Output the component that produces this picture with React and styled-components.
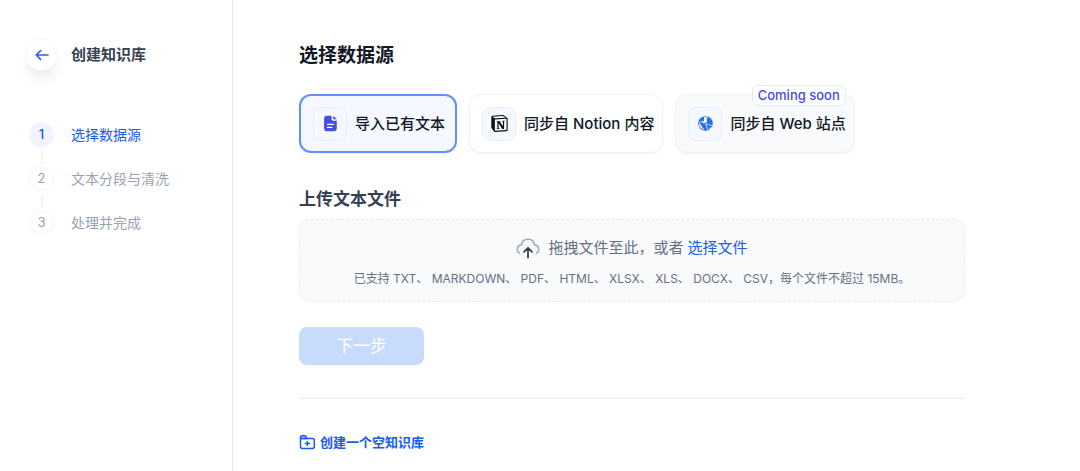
import React from "react";
import styled, { createGlobalStyle, css } from "styled-components";

const GlobalStyle = createGlobalStyle`
  *, *::before, *::after { box-sizing: border-box; }
  body {
    margin: 0;
    background: #fff;
    color: #111827;
    font-family: Inter, "Noto Sans CJK SC", sans-serif;
    -webkit-font-smoothing: antialiased;
  }
  h1, h2, p, ol { margin: 0; padding: 0; }
  button { font-family: inherit; }
  a { text-decoration: none; }
`;

const Page = styled.div`
  display: flex;
  min-height: 100vh;
`;

const Sidebar = styled.aside`
  flex: 0 0 233px;
  padding: 38px 24px 0 25px;
  border-right: 1px solid #e5e7eb;
`;

const SidebarHeader = styled.div`
  display: flex;
  align-items: center;
  gap: 13px;
`;

const BackButton = styled.button`
  display: flex;
  align-items: center;
  justify-content: center;
  width: 33px;
  height: 33px;
  padding: 0;
  border: 1px solid #f6f7f9;
  border-radius: 50%;
  background: #fff;
  color: #2563eb;
  box-shadow: 0 12px 16px -4px rgba(16, 24, 40, 0.08), 0 4px 6px -2px rgba(16, 24, 40, 0.03);
`;

const SidebarTitle = styled.h1`
  font-size: 15px;
  line-height: 24px;
  font-weight: 600;
  color: #374151;
`;

const StepList = styled.ol`
  list-style: none;
  margin-top: 51px;
  padding-left: 4px;
`;

const Step = styled.li`
  display: flex;
  align-items: center;
  gap: 17px;
  font-size: 14px;
  line-height: 25px;
  color: ${(p) => (p.$active ? "#155eef" : "#98a2b3")};

  & + & { margin-top: 19px; }
`;

const StepNumber = styled.span`
  position: relative;
  flex: none;
  width: 25px;
  height: 25px;
  border: 1px solid ${(p) => (p.$active ? "#eff4ff" : "#f2f4f7")};
  border-radius: 50%;
  background: ${(p) => (p.$active ? "#eff4ff" : "#fff")};
  font-size: 13px;
  line-height: 23px;
  font-weight: ${(p) => (p.$active ? 500 : 400)};
  text-align: center;

  ${Step}:not(:last-child) &::after {
    content: "";
    position: absolute;
    top: 27px;
    left: 11px;
    width: 2px;
    height: 14px;
    background: #f2f4f7;
  }
`;

const Main = styled.main`
  flex: 1;
  padding: 43px 66px 18px;
`;

const Content = styled.div`
  max-width: 666px;
`;

const PageTitle = styled.h2`
  font-size: 19px;
  line-height: 26px;
  font-weight: 600;
`;

const SourceList = styled.div`
  display: flex;
  gap: 12px;
  margin-top: 25px;
`;

const SourceCard = styled.button`
  position: relative;
  display: flex;
  align-items: center;
  gap: 8px;
  height: 59px;
  padding: 0 8px 0 12px;
  border: 1px solid #f2f4f7;
  border-radius: 12px;
  background: #fff;
  box-shadow: 0 1px 2px rgba(16, 24, 40, 0.05);
  color: #111827;
  font-size: 15px;
  line-height: 21px;
  font-weight: 500;
  white-space: nowrap;

  ${(p) => p.$selected && css`
    padding: 0 10px 0 12px;
    border: 2px solid #6090fa;
    background: #f5f8ff;
  `}
  ${(p) => p.disabled && css`
    background: #f9fafb;
  `}
`;

const IconTile = styled.span`
  display: flex;
  align-items: center;
  justify-content: center;
  width: 34px;
  height: 34px;
  border: 1px solid #e4efff;
  border-radius: 8px;
  background: #f5f9ff;
`;

const SoonBadge = styled.span`
  position: absolute;
  top: -10px;
  right: 8px;
  padding: 0 5px;
  border: 1px solid #e0eaff;
  border-radius: 6px;
  background: #fff;
  color: #444ce7;
  font-size: 13px;
  line-height: 19px;
  font-weight: 500;
`;

const SectionTitle = styled.h2`
  margin-top: 33px;
  font-size: 17px;
  line-height: 26px;
  font-weight: 600;
  color: #344054;
`;

const DropZone = styled.div`
  margin-top: 7px;
  padding: 15px 12px 13px;
  border: 1px dashed #eaecf0;
  border-radius: 12px;
  background: #f9fafb;
  color: #667085;
  text-align: center;
`;

const DropPrompt = styled.p`
  display: flex;
  align-items: center;
  justify-content: center;
  gap: 4px;
  font-size: 15px;
  line-height: 26px;

  svg { margin-right: 4px; }
`;

const BrowseLink = styled.a`
  color: #155eef;
`;

const DropHint = styled.p`
  margin-top: 8px;
  font-size: 12px;
  line-height: 19px;
`;

const NextButton = styled.button`
  display: block;
  width: 125px;
  margin-top: 25px;
  padding: 6px 0;
  border: 0;
  border-radius: 8px;
  background: #c7dcfa;
  color: #fff;
  font-size: 17px;
  line-height: 26px;
`;

const Divider = styled.hr`
  margin: 33px 0;
  border: 0;
  border-top: 1px solid #eaecf0;
`;

const CreateLink = styled.a`
  display: inline-flex;
  align-items: center;
  gap: 4px;
  color: #155eef;
  font-size: 13px;
  line-height: 20px;
  font-weight: 600;
`;

const ArrowIcon = () => (
  <svg width="14" height="12" viewBox="0 0 14 12" fill="none" stroke="currentColor" strokeWidth="1.6" strokeLinecap="round" strokeLinejoin="round">
    <path d="M13 6H1.2M5.600 1.600 1.200 6l4.400 4.400" />
  </svg>
);

const FileIcon = () => (
  <svg width="17" height="17" viewBox="0 0 16 16">
    <path fill="#444ce7" d="M4.600.700H9v3.100c0 .9.600 1.500 1.500 1.500h3.400v7.100c0 1.800-1 2.900-2.700 2.900H4.600c-1.700 0-2.600-1.100-2.600-2.900V3.600C2 1.800 2.900.700 4.600.700Z" />
    <path fill="#444ce7" d="M10.500.900c.3.100.4.200.6.400l2.100 2.100c.2.200.3.300.4.600h-2.700c-.2 0-.4-.2-.4-.4Z" />
    <path stroke="#fff" strokeWidth="1.200" strokeLinecap="round" d="M5.300 8.900h5.400M5.300 11.700h4" />
  </svg>
);

const NotionIcon = () => (
  <svg width="17" height="17" viewBox="0 0 24 24" fill="#111">
    <path d="M1.200 2.500 5 6.500V23l-3.800-4.500Z" />
    <path d="M4.459 4.208c.746.606 1.026.56 2.428.466l13.215-.793c.28 0 .047-.28-.046-.326L17.860 1.968c-.42-.326-.981-.7-2.055-.607L3.010 2.295c-.466.046-.56.280-.374.466zm.793 3.080v13.904c0 .747.373 1.027 1.214.98l14.523-.84c.841-.046.935-.56.935-1.167V6.354c0-.606-.233-.933-.748-.887l-15.177.887c-.56.047-.747.327-.747.933zm14.337.745c.093.42 0 .840-.420.888l-.7.140v10.264c-.608.327-1.168.514-1.635.514-.748 0-.935-.234-1.495-.933l-4.577-7.186v6.952L12.210 19s0 .840-1.168.840l-3.222.186c-.093-.186 0-.653.327-.746l.840-.233V9.854L7.822 9.760c-.094-.420.140-1.026.793-1.073l3.456-.233 4.764 7.279v-6.440l-1.215-.139c-.093-.514.280-.887.747-.933zM1.936 1.035l13.310-.98c1.634-.140 2.055-.047 3.082.7l4.249 2.986c.7.513.934.653.934 1.213v16.378c0 1.026-.373 1.634-1.680 1.726l-15.458.934c-.98.047-1.448-.093-1.962-.747l-3.129-4.060c-.56-.747-.793-1.306-.793-1.960V2.667c0-.839.374-1.540 1.447-1.632z" />
  </svg>
);

const WebIcon = () => (
  <svg width="17" height="17" viewBox="0 0 17 17">
    <circle cx="8.500" cy="8.500" r="7.300" fill="#2970e8" />
    <path fill="#f5f9ff" d="M6.800 2.300c1.200-.4 2.500-.4 3.700 0l-.8 1.500.3 3.200-2 1.100-1.500.100-1.800-1-1.700.100-.5 1.400 1.600.900.400 1.800 2 2 .500 1.400-.9-.2-3.300-2.700-.9-3.400L2.800 6.800 5.300 6.300 6.900 6.200 7.300 4Z" />
    <path fill="#f5f9ff" d="M7.900 8.300 17 10.800v2.800l-2 .700-1.400 2.900h-1.900Z" />
    <path fill="#2970e8" d="m9.200 9.300 6.800 2-2.900 1.600-1.400 2.900Z" />
  </svg>
);

const CloudIcon = () => (
  <svg width="24" height="24" viewBox="0 0 24 24" fill="none" strokeWidth="1.600" strokeLinecap="round" strokeLinejoin="round">
    <path stroke="#a3a9b5" d="M3.600 17.300C2.200 16.500 1.300 15.100 1.300 13.400c0-2.400 1.800-4.300 4.200-4.500C6 5.500 8.600 3.200 12 3.200s6 2.300 6.500 5.700c2.400.2 4.200 2.100 4.200 4.500 0 1.700-.9 3.100-2.300 3.900" />
    <path stroke="#344054" strokeWidth="1.800" d="M12 21.500V12M8 15.800l4-4 4 4" />
  </svg>
);

const FolderPlusIcon = () => (
  <svg width="17" height="17" viewBox="0 0 17 17" fill="none" stroke="currentColor" strokeWidth="1.500" strokeLinecap="round" strokeLinejoin="round">
    <path fill="#c7d7fe" d="M1.500 4.500V3.400c0-1 .6-1.600 1.600-1.600h2.500c.8 0 1.200.4 1.500 1l.9 1.700Z" />
    <path d="M1.500 4.500h11.800c1.300 0 2 .8 2 2v6c0 1.300-.7 2-2 2H3.500c-1.300 0-2-.7-2-2ZM8.400 7.400v4.200M6.300 9.500h4.200" />
  </svg>
);

const steps = ["选择数据源", "文本分段与清洗", "处理并完成"];

export default function App() {
  return (
    <>
      <GlobalStyle />
      <Page>
        <Sidebar>
          <SidebarHeader>
            <BackButton type="button" aria-label="返回"><ArrowIcon /></BackButton>
            <SidebarTitle>创建知识库</SidebarTitle>
          </SidebarHeader>
          <StepList>
            {steps.map((label, i) => (
              <Step key={label} $active={i === 0}>
                <StepNumber $active={i === 0}>{i + 1}</StepNumber>
                {label}
              </Step>
            ))}
          </StepList>
        </Sidebar>
        <Main>
          <Content>
            <PageTitle>选择数据源</PageTitle>
            <SourceList>
              <SourceCard type="button" $selected>
                <IconTile><FileIcon /></IconTile>
                导入已有文本
              </SourceCard>
              <SourceCard type="button">
                <IconTile><NotionIcon /></IconTile>
                同步自 Notion 内容
              </SourceCard>
              <SourceCard type="button" disabled>
                <SoonBadge>Coming soon</SoonBadge>
                <IconTile><WebIcon /></IconTile>
                同步自 Web 站点
              </SourceCard>
            </SourceList>
            <SectionTitle>上传文本文件</SectionTitle>
            <DropZone>
              <DropPrompt>
                <CloudIcon />
                <span>拖拽文件至此，或者</span>
                <BrowseLink href="#browse">选择文件</BrowseLink>
              </DropPrompt>
              <DropHint>
                已支持 TXT、 MARKDOWN、 PDF、 HTML、 XLSX、 XLS、 DOCX、 CSV，每个文件不超过 15MB。
              </DropHint>
            </DropZone>
            <NextButton type="button" disabled>下一步</NextButton>
            <Divider />
            <CreateLink href="#create"><FolderPlusIcon />创建一个空知识库</CreateLink>
          </Content>
        </Main>
      </Page>
    </>
  );
}
